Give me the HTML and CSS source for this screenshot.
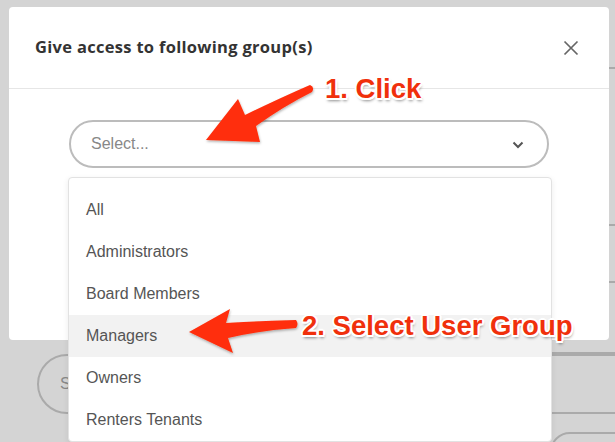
FILE: index.html
```html
<!DOCTYPE html>
<html lang="en">
<head>
  <meta charset="UTF-8">
  <meta name="viewport" content="width=device-width, initial-scale=1.0">
  <title>Give access</title>
  <link rel="stylesheet" href="styles.css">
</head>
<body>
  <!-- dimmed page behind the modal -->
  <div class="page">
    <div class="row row-1"></div>
    <div class="row row-2"></div>
    <div class="row row-3"></div>
    <div class="row row-4"></div>
    <div class="search-row">
      <div class="search-pill">S</div>
      <div class="search-field"></div>
    </div>
    <div class="footer-row">
      <div class="corner-pill"></div>
    </div>
  </div>

  <div class="modal">
    <div class="modal-header">
      <h2>Give access to following group(s)</h2>
      <button class="close" aria-label="Close">
        <svg width="16" height="16" viewBox="0 0 16 16"><path d="M1.5 1.5 L14.5 14.5 M14.5 1.5 L1.5 14.5" stroke="#666" stroke-width="1.7" fill="none"/></svg>
      </button>
    </div>
    <div class="modal-body">
      <div class="select">
        <span class="placeholder">Select...</span>
        <svg class="chevron" width="12" height="8" viewBox="0 0 12 8"><path d="M1.5 1.5 L6 6 L10.5 1.5" stroke="#555" stroke-width="2" fill="none"/></svg>
        <ul class="menu">
          <li>All</li>
          <li>Administrators</li>
          <li>Board Members</li>
          <li class="active">Managers</li>
          <li>Owners</li>
          <li>Renters Tenants</li>
        </ul>
      </div>
    </div>
  </div>

  <!-- annotations drawn over the screenshot -->
  <svg class="arrows" width="615" height="442" viewBox="0 0 615 442">
    <defs>
      <filter id="shade" x="-20%" y="-20%" width="140%" height="140%">
        <feDropShadow dx="0.5" dy="1.5" stdDeviation="1.2" flood-color="#000" flood-opacity="0.3"/>
      </filter>
    </defs>
    <path filter="url(#shade)" fill="#ff2d0a" d="M206 140 L238 99 L245 115 Q280 98 310 85 Q315 87 312 92 Q284 106 256 126 L260 142 Z"/>
    <path filter="url(#shade)" fill="#ff2d0a" d="M189 332 L230 309 L226 323 Q262 321 296 320 Q299 324 296 328 Q262 330 228 338 L233 353 Z"/>
  </svg>
  <div class="note note-1">1. Click</div>
  <div class="note note-2">2. Select User Group</div>
</body>
</html>
```

FILE: styles.css
```css
* {
  margin: 0;
  padding: 0;
  box-sizing: border-box;
}
body {
  width: 615px;
  height: 442px;
  overflow: hidden;
  background: #d4d4d4;
  font-family: 'Liberation Sans', Arial, sans-serif;
  position: relative;
}
.page {
  display: flex;
  flex-direction: column;
  height: 442px;
  overflow: hidden;
}
.row {
  margin-left: 300px;
  border-bottom: 2px solid #aaa;
  flex-shrink: 0;
}
.row-1 { height: 69px; }
.row-2 { height: 157px; }
.row-3 { height: 57px; }
.row-4 { height: 71px; }
.search-row {
  display: flex;
  align-items: stretch;
  padding-left: 37px;
  height: 60px;
  flex-shrink: 0;
}
.search-pill {
  width: 90px;
  border: 2px solid #aaa;
  border-radius: 30px;
  color: #888;
  font-size: 16px;
  padding-left: 21px;
  display: flex;
  align-items: center;
}
.search-field {
  flex: 1;
  margin-left: 150px;
  border-top: 2px solid #aaa;
  border-bottom: 2px solid #aaa;
}
.footer-row {
  padding: 18px 0 0 550px;
}
.corner-pill {
  width: 120px;
  height: 40px;
  border: 2px solid #aaa;
  border-radius: 20px;
}
.modal {
  position: absolute;
  top: 7px;
  left: 9px;
  width: 600px;
  height: 333px;
  background: #fff;
  border-radius: 4px;
}
.modal-header {
  height: 82px;
  padding: 0 30px 0 26px;
  display: flex;
  align-items: center;
  justify-content: space-between;
  border-bottom: 1px solid #e6e6e6;
}
.modal-header h2 {
  font-family: 'Open Sans', sans-serif;
  font-weight: 700;
  font-size: 16.5px;
  color: #333;
  letter-spacing: 0.3px;
  padding-bottom: 2px;
}
.close {
  background: none;
  border: none;
  width: 16px;
  height: 16px;
  display: flex;
}
.modal-body {
  padding: 31px 60px 0;
}
.select {
  position: relative;
  height: 48px;
  border: 2px solid #bcbcbc;
  border-radius: 24px;
  display: flex;
  align-items: center;
  justify-content: space-between;
  padding: 0 23px 0 20px;
}
.placeholder {
  font-size: 16px;
  color: #888;
}
.chevron {
  margin-top: 2px;
}
.menu {
  position: absolute;
  top: 55px;
  left: -3px;
  width: 484px;
  list-style: none;
  background: #fff;
  border: 1px solid #e2e2e2;
  border-radius: 4px;
  box-shadow: 0 2px 6px rgba(0, 0, 0, 0.08);
  padding-top: 11px;
}
.menu li {
  height: 42px;
  line-height: 42px;
  padding-left: 17px;
  font-size: 16px;
  color: #555;
}
.menu li.active {
  background: #f2f2f2;
}
.arrows {
  position: absolute;
  top: 0;
  left: 0;
}
.note {
  position: absolute;
  font-family: 'Liberation Sans', Arial, sans-serif;
  font-weight: bold;
  font-size: 27.5px;
  line-height: 30px;
  color: #f0300c;
  white-space: nowrap;
  text-shadow:
    -1.5px -1.5px 0 #fff, 1.5px -1.5px 0 #fff, -1.5px 1.5px 0 #fff, 1.5px 1.5px 0 #fff,
    0 -2px 0 #fff, 0 2px 0 #fff, -2px 0 0 #fff, 2px 0 0 #fff,
    1px 3px 3px rgba(0, 0, 0, 0.45);
}
.note-1 {
  top: 74px;
  left: 325px;
}
.note-2 {
  top: 311px;
  left: 302px;
}
```
